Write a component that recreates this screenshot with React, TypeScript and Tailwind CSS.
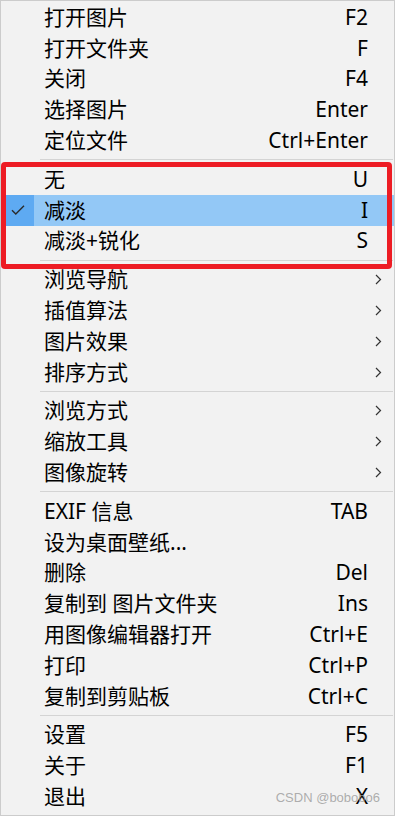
import React from 'react';

type Item =
  | { kind: 'item'; label: string; shortcut?: string; submenu?: boolean; checked?: boolean; active?: boolean }
  | { kind: 'sep' };

const ITEMS: Item[] = [
  { kind: 'item', label: '打开图片', shortcut: 'F2' },
  { kind: 'item', label: '打开文件夹', shortcut: 'F' },
  { kind: 'item', label: '关闭', shortcut: 'F4' },
  { kind: 'item', label: '选择图片', shortcut: 'Enter' },
  { kind: 'item', label: '定位文件', shortcut: 'Ctrl+Enter' },
  { kind: 'sep' },
  { kind: 'item', label: '无', shortcut: 'U' },
  { kind: 'item', label: '减淡', shortcut: 'I', checked: true, active: true },
  { kind: 'item', label: '减淡+锐化', shortcut: 'S' },
  { kind: 'sep' },
  { kind: 'item', label: '浏览导航', submenu: true },
  { kind: 'item', label: '插值算法', submenu: true },
  { kind: 'item', label: '图片效果', submenu: true },
  { kind: 'item', label: '排序方式', submenu: true },
  { kind: 'sep' },
  { kind: 'item', label: '浏览方式', submenu: true },
  { kind: 'item', label: '缩放工具', submenu: true },
  { kind: 'item', label: '图像旋转', submenu: true },
  { kind: 'sep' },
  { kind: 'item', label: 'EXIF 信息', shortcut: 'TAB' },
  { kind: 'item', label: '设为桌面壁纸...' },
  { kind: 'item', label: '删除', shortcut: 'Del' },
  { kind: 'item', label: '复制到 图片文件夹', shortcut: 'Ins' },
  { kind: 'item', label: '用图像编辑器打开', shortcut: 'Ctrl+E' },
  { kind: 'item', label: '打印', shortcut: 'Ctrl+P' },
  { kind: 'item', label: '复制到剪贴板', shortcut: 'Ctrl+C' },
  { kind: 'sep' },
  { kind: 'item', label: '设置', shortcut: 'F5' },
  { kind: 'item', label: '关于', shortcut: 'F1' },
  { kind: 'item', label: '退出', shortcut: 'X' },
];

const Check = () => (
  <svg width="14" height="10" viewBox="0 0 14 10" fill="none">
    <path d="M1 5.2 L4.8 9 L13 0.8" stroke="#2b2b2b" strokeWidth="1.4" />
  </svg>
);

const Chevron = () => (
  <svg width="7" height="11" viewBox="0 0 7 11" fill="none">
    <path d="M1 1 L5.5 5.5 L1 10" stroke="#333333" strokeWidth="1.2" />
  </svg>
);

export default function App() {
  return (
    <div
      className="relative w-[395px] h-[816px] bg-[#f2f2f2] border border-[#cccccc] pt-[1px] flex flex-col overflow-hidden text-black"
      style={{ fontFamily: '"Noto Sans", "Noto Sans CJK SC", sans-serif' }}
    >
      {ITEMS.map((it, i) =>
        it.kind === 'sep' ? (
          <div key={i} className="h-[8px] shrink-0 flex items-center pl-[39px] pr-[1px]">
            <div className="h-px w-full bg-[#d4d4d4]" />
          </div>
        ) : (
          <div
            key={i}
            className={`h-[30.8px] shrink-0 flex items-center text-[21px] leading-none ${it.active ? 'bg-[#93c8f6]' : ''}`}
          >
            <div className={`w-[33px] h-full flex items-center justify-center ${it.active ? 'bg-[#5eaaf2]' : ''}`}>
              {it.checked && <Check />}
            </div>
            <span className="ml-[10px] whitespace-nowrap">{it.label}</span>
            <span className="flex-1" />
            {it.shortcut && <span className="whitespace-nowrap">{it.shortcut}</span>}
            <div className="w-[26px] h-full flex items-center pl-[7px]">
              {it.submenu && <Chevron />}
            </div>
          </div>
        )
      )}

      <div className="absolute left-0 top-[161px] w-[391px] h-[107px] border-[5px] border-[#ed1c24] rounded-[4px]" />

      <div
        className="absolute right-[14px] bottom-[8px] text-[13px] text-[#9a9a9a]/80 whitespace-nowrap"
        style={{ fontFamily: '"Liberation Sans", Arial, sans-serif' }}
      >
        CSDN @bobobo6
      </div>
    </div>
  );
}
